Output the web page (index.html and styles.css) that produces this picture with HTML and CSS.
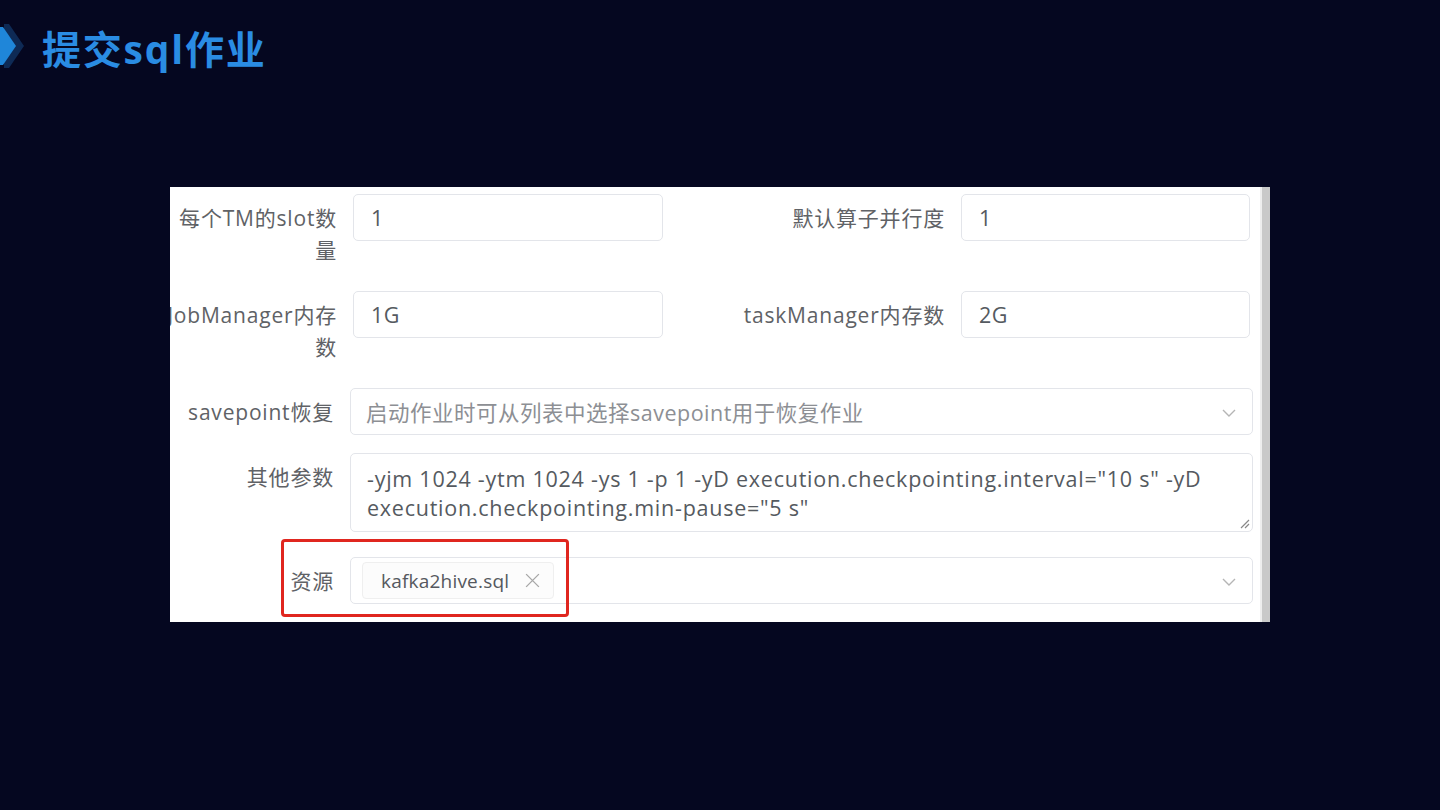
FILE: index.html
```html
<!DOCTYPE html>
<html lang="zh-CN">
<head>
<meta charset="UTF-8" />
<title>提交sql作业</title>
<link rel="stylesheet" href="styles.css">
</head>
<body>
<header class="slide-title">
  <svg class="chevron" width="26" height="46" viewBox="0 0 26 46">
    <polygon points="4,0 9,0 24,22 9,44 4,44" fill="#0e2a55"/>
    <polygon points="0,3 3,3 16,22 3,41 0,41" fill="#1f86d9"/>
  </svg>
  <h1>提交sql作业</h1>
</header>

<main class="stage">
  <div class="shot">
    <form class="form">
      <div class="row row-half row-tall">
        <label class="label"><span>每个TM的slot数</span><span>量</span></label>
        <div class="input">1</div>
        <label class="label"><span>默认算子并行度</span></label>
        <div class="input">1</div>
      </div>

      <div class="row row-half row-tall">
        <label class="label"><span>JobManager内存</span><span>数</span></label>
        <div class="input">1G</div>
        <label class="label"><span>taskManager内存数</span></label>
        <div class="input">2G</div>
      </div>

      <div class="row">
        <label class="label"><span>savepoint恢复</span></label>
        <div class="select placeholder">
          <span>启动作业时可从列表中选择savepoint用于恢复作业</span>
          <svg class="arrow" width="14" height="8" viewBox="0 0 14 8"><path d="M1 1 L7 7 L13 1" fill="none" stroke="#b5b5b5" stroke-width="1.4"/></svg>
        </div>
      </div>

      <div class="row row-area">
        <label class="label"><span>其他参数</span></label>
        <div class="textarea">-yjm 1024 -ytm 1024 -ys 1 -p 1 -yD execution.checkpointing.interval="10 s" -yD
execution.checkpointing.min-pause="5 s"<svg class="grip" width="12" height="12" viewBox="0 0 12 12"><path d="M11 3 L3 11 M11 7 L7 11" stroke="#888" stroke-width="1.2"/></svg></div>
      </div>

      <div class="row">
        <label class="label"><span>资源</span></label>
        <div class="select">
          <span class="tag">kafka2hive.sql
            <svg width="17" height="17" viewBox="0 0 16 16"><path d="M2 2 L14 14 M14 2 L2 14" stroke="#a8a8a8" stroke-width="1.3"/></svg>
          </span>
          <svg class="arrow" width="14" height="8" viewBox="0 0 14 8"><path d="M1 1 L7 7 L13 1" fill="none" stroke="#b5b5b5" stroke-width="1.4"/></svg>
        </div>
        <div class="highlight"></div>
      </div>
    </form>
    <div class="scrollbar"></div>
  </div>
</main>
</body>
</html>
```

FILE: styles.css
```css
* {
  margin: 0;
  padding: 0;
  box-sizing: border-box;
}

body {
  width: 1440px;
  height: 810px;
  overflow: hidden;
  background: #050720;
  font-family: "Open Sans", "Noto Sans CJK SC", sans-serif;
}

/* Slide title */
.slide-title {
  display: flex;
  align-items: center;
  gap: 16px;
  height: 96px;
  padding-bottom: 2px;
}

.chevron {
  flex: none;
}

.slide-title h1 {
  font-family: "Open Sans", "Noto Sans CJK SC", sans-serif;
  font-size: 39px;
  font-weight: 700;
  color: #2a8ce3;
  letter-spacing: 1.8px;
}

/* Screenshot panel */
.stage {
  padding: 91px 0 0 170px;
}

.shot {
  width: 1100px;
  height: 435px;
  background: #fff;
  display: flex;
  overflow: hidden;
  letter-spacing: 0.5px;
}

.form {
  flex: 1;
  padding-top: 7px;
}

.scrollbar {
  width: 10px;
  background: #c9c9c9;
  border-left: 2px solid #eeeeee;
}

.row {
  position: relative;
  display: grid;
  grid-template-columns: 164px 903px;
  column-gap: 16px;
  align-items: start;
  margin-bottom: 18px;
}

.row-half {
  grid-template-columns: 167px 310px 266px 289px;
}

.row-tall {
  min-height: 79px;
}

.row-area {
  margin-bottom: 25px;
}

.label {
  display: flex;
  flex-direction: column;
  align-items: flex-end;
  padding-top: 8px;
  font-size: 21px;
  line-height: 32px;
  letter-spacing: 0.8px;
  color: #606266;
  white-space: nowrap;
}

.input,
.select,
.textarea {
  border: 1px solid #e3e5ea;
  border-radius: 5px;
  font-size: 21.5px;
  color: #555a60;
}

.input {
  height: 47px;
  padding: 0 17px;
  line-height: 45px;
}

.select {
  height: 47px;
  display: flex;
  align-items: center;
  justify-content: space-between;
  padding: 0 16px 0 15px;
}

.placeholder {
  color: #8d8f94;
}

.arrow {
  margin-top: 2px;
}

.textarea {
  position: relative;
  height: 79px;
  padding: 10px 16px 0;
  line-height: 29px;
  letter-spacing: 0.75px;
  white-space: pre-wrap;
}

.grip {
  position: absolute;
  right: 2px;
  bottom: 2px;
}

.tag {
  display: flex;
  align-items: center;
  gap: 15px;
  height: 37px;
  padding: 0 12px 0 18px;
  margin-left: -4px;
  background: #fcfcfc;
  border: 1px solid #efefef;
  border-radius: 4px;
  font-size: 19px;
  letter-spacing: 0.2px;
  color: #55585e;
}

/* Red annotation box */
.highlight {
  position: absolute;
  left: 111px;
  top: -18px;
  width: 288px;
  height: 78px;
  border: 3px solid #e0261f;
  border-radius: 4px;
}
```
